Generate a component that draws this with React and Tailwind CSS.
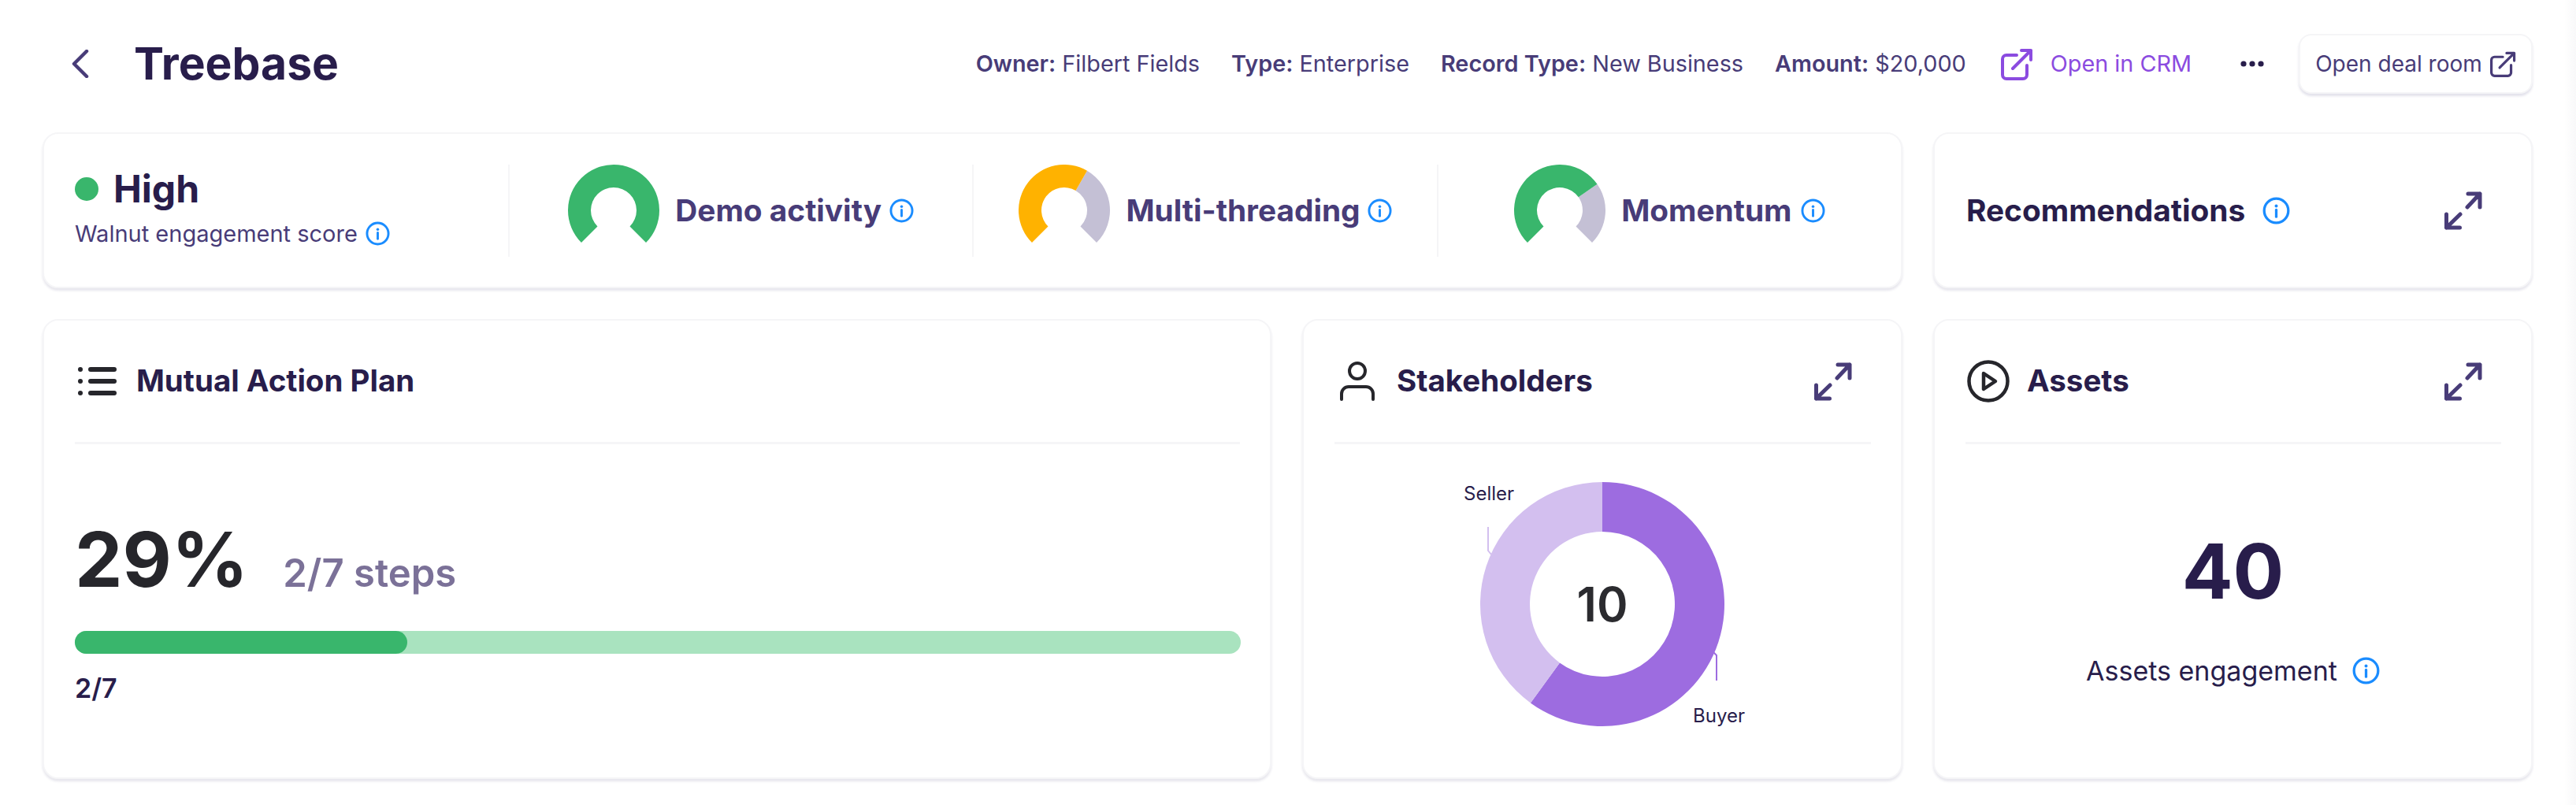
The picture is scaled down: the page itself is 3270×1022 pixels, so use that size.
import React from 'react';

const polar = (cx, cy, r, deg) => {
  const rad = ((deg - 90) * Math.PI) / 180;
  return [cx + r * Math.cos(rad), cy + r * Math.sin(rad)];
};

// ring segment between two angles, 0deg is straight up
const arc = (cx, cy, outer, inner, from, to) => {
  const large = to - from > 180 ? 1 : 0;
  const [x1, y1] = polar(cx, cy, outer, from);
  const [x2, y2] = polar(cx, cy, outer, to);
  const [x3, y3] = polar(cx, cy, inner, to);
  const [x4, y4] = polar(cx, cy, inner, from);
  return `M${x1} ${y1}A${outer} ${outer} 0 ${large} 1 ${x2} ${y2}L${x3} ${y3}A${inner} ${inner} 0 ${large} 0 ${x4} ${y4}Z`;
};

const Gauge = ({ color, split }) => (
  <svg width="116" height="100" viewBox="0 0 116 100" className="shrink-0">
    {split < 135 && <path d={arc(58, 58, 58, 29, split, 135)} fill="#c4c0d5" />}
    <path d={arc(58, 58, 58, 29, -135, split)} fill={color} />
  </svg>
);

const InfoIcon = ({ size = 31 }) => (
  <svg width={size} height={size} viewBox="0 0 32 32" fill="none" className="shrink-0">
    <circle cx="16" cy="16" r="14" stroke="#1a8cff" strokeWidth="3" />
    <circle cx="16" cy="10.5" r="1.8" fill="#1a8cff" />
    <path d="M16 15v8" stroke="#1a8cff" strokeWidth="3" strokeLinecap="round" />
  </svg>
);

const ExpandIcon = () => (
  <svg width="49" height="49" viewBox="0 0 49 49" fill="none" className="shrink-0">
    <path d="M30 20L46 3M31 3h15v17M21 29L3.500 46M3.500 29v17h17" stroke="#483c78" strokeWidth="5" strokeLinecap="round" strokeLinejoin="round" />
  </svg>
);

const ExternalIcon = ({ size, color, width }) => (
  <svg width={size} height={size} viewBox="0 0 41 41" fill="none" className="shrink-0">
    <path d="M20 9H7a5 5 0 0 0-5 5v20a5 5 0 0 0 5 5h21a5 5 0 0 0 5-5V22M15 26L38 3M26 3h12v12" stroke={color} strokeWidth={width} strokeLinecap="round" strokeLinejoin="round" />
  </svg>
);

const Card = ({ className, children }) => (
  <div className={`rounded-[20px] border-2 border-[#f5f5f7] bg-white shadow-[0_3px_3px_rgba(60,50,110,0.12)] ${className}`}>
    {children}
  </div>
);

const Meta = ({ label, value }) => (
  <span className="text-[28.8px] text-[#483c78] whitespace-nowrap">
    <span className="font-semibold">{label}:</span> {value}
  </span>
);

const Metric = ({ title, color, split, gap }) => (
  <div className="flex-1 h-[117px] flex items-center justify-center border-l-2 border-[#f5f5f7]">
    <div className="flex items-center">
      <div className="h-[117px]">
        <Gauge color={color} split={split} />
      </div>
      <span className="ml-[20px] text-[38.8px] font-bold text-[#483c78] whitespace-nowrap">{title}</span>
      <span className={gap}>
        <InfoIcon />
      </span>
    </div>
  </div>
);

const CardHeader = ({ icon, title, expand = true }) => (
  <div className="h-[157px] ml-[39px] mr-[38px] flex items-center justify-between border-b-[3px] border-[#f5f5f7]">
    <div className="flex items-center">
      {icon}
      <span className="text-[38.5px] font-bold text-[#281d4b]">{title}</span>
    </div>
    {expand && (
      <div className="mr-[24px]">
        <ExpandIcon />
      </div>
    )}
  </div>
);

const StakeholderChart = () => (
  <div className="relative w-[380px] h-[340px] mt-[45px] mx-auto">
    <svg width="380" height="340" viewBox="0 0 380 340" fill="none">
      <path d={arc(190, 158, 155, 92, 0, 216)} fill="#9d6ce0" />
      <path d={arc(190, 158, 155, 92, 216, 360)} fill="#d3bfef" />
      <path d="M45 60V90L49 95" stroke="#d3bfef" strokeWidth="2" />
      <path d="M331 219L335 223V255" stroke="#9d6ce0" strokeWidth="2" />
    </svg>
    <span className="absolute left-[14px] top-0 text-[24px] text-[#281d4b]">Seller</span>
    <span className="absolute left-[305px] top-[282px] text-[24px] text-[#281d4b]">Buyer</span>
    <span className="absolute left-0 right-0 top-[122px] text-center text-[60px] leading-[72px] font-semibold text-[#2b2b2f]">10</span>
  </div>
);

export default function App() {
  return (
    <div className="w-[3270px] h-[1022px] flex bg-white font-['Inter','Liberation_Sans',sans-serif] overflow-hidden">
      <div className="flex-1 pl-[54px] pr-[40px]">
        {/* Top bar */}
        <div className="h-[168px] pt-[43px] flex justify-between items-start">
          <div className="h-[76px] flex items-center pl-[36px]">
            <svg width="24" height="36" viewBox="0 0 24 36" fill="none">
              <path d="M20 2L4 18l16 16" stroke="#483c78" strokeWidth="4.500" strokeLinecap="round" strokeLinejoin="round" />
            </svg>
            <h1 className="ml-[56px] text-[57px] font-bold text-[#281d4b]">Treebase</h1>
          </div>
          <div className="flex items-center h-[76px]">
            <div className="flex items-center gap-[40px]">
              <Meta label="Owner" value="Filbert Fields" />
              <Meta label="Type" value="Enterprise" />
              <Meta label="Record Type" value="New Business" />
              <Meta label="Amount" value="$20,000" />
            </div>
            <div className="ml-[44px] flex items-center gap-[22px]">
              <ExternalIcon size={41} color="#8b4be0" width={4} />
              <span className="text-[28.8px] text-[#8b4be0] whitespace-nowrap">Open in CRM</span>
            </div>
            <svg width="30" height="8" viewBox="0 0 30 8" className="ml-[62px] mr-[44px]">
              <circle cx="4" cy="4" r="3.6" fill="#281d4b" />
              <circle cx="15" cy="4" r="3.6" fill="#281d4b" />
              <circle cx="26" cy="4" r="3.6" fill="#281d4b" />
            </svg>
            <button className="h-[76px] w-[297px] flex items-center justify-center gap-[10px] rounded-[16px] border-2 border-[#f5f5f7] bg-white shadow-[0_3px_3px_rgba(60,50,110,0.14)] text-[28px] text-[#483c78] whitespace-nowrap">
              Open deal room
              <ExternalIcon size={33} color="#483c78" width={4} />
            </button>
          </div>
        </div>

        {/* Score row */}
        <div className="flex gap-[39px] h-[198px]">
          <Card className="w-[2361px] flex items-center">
            <div className="w-[589px] self-start pt-[41px] pl-[39px]">
              <div className="flex items-center gap-[19px]">
                <span className="w-[30px] h-[30px] rounded-full bg-[#39b66c]" />
                <span className="text-[48px] leading-[58px] font-bold text-[#281d4b]">High</span>
              </div>
              <div className="mt-[6px] flex items-center gap-[10px]">
                <span className="text-[29px] text-[#483c78]">Walnut engagement score</span>
                <InfoIcon />
              </div>
            </div>
            <Metric title="Demo activity" color="#39b66c" split={135} gap="ml-[10px]" />
            <Metric title="Multi-threading" color="#ffb200" split={30} gap="ml-[9px]" />
            <Metric title="Momentum" color="#39b66c" split={55} gap="ml-[11px]" />
          </Card>
          <Card className="w-[761px] flex items-center justify-between pl-[40px] pr-[62px]">
            <div className="flex items-center gap-[22px]">
              <span className="text-[38.8px] font-bold text-[#281d4b]">Recommendations</span>
              <InfoIcon size={35} />
            </div>
            <ExpandIcon />
          </Card>
        </div>

        {/* Detail row */}
        <div className="flex gap-[39px] h-[584px] mt-[39px]">
          <Card className="w-[1560px]">
            <CardHeader
              expand={false}
              title="Mutual Action Plan"
              icon={
                <svg width="49" height="36" viewBox="0 0 49 36" className="ml-[4px] mr-[25px]" fill="#26262b">
                  <rect x="13" y="0" width="36" height="6" rx="3" />
                  <rect x="13" y="15" width="36" height="6" rx="3" />
                  <rect x="13" y="30" width="36" height="6" rx="3" />
                  <circle cx="3" cy="3" r="3" />
                  <circle cx="3" cy="18" r="3" />
                  <circle cx="3" cy="33" r="3" />
                </svg>
              }
            />
            <div className="ml-[39px] mr-[37px]">
              <div className="mt-[86px] flex items-baseline gap-[44px]">
                <span className="text-[96px] leading-[120px] font-bold text-[#26262b]">29%</span>
                <span className="text-[49px] font-semibold text-[#7b7198]">2/7 steps</span>
              </div>
              <div className="mt-[31px] h-[29px] rounded-full bg-[#a9e3bf]">
                <div className="w-[422px] h-full rounded-full bg-[#39b66c]" />
              </div>
              <div className="mt-[18px] text-[34px] font-semibold text-[#281d4b]">2/7</div>
            </div>
          </Card>

          <Card className="w-[762px]">
            <CardHeader
              title="Stakeholders"
              icon={
                <svg width="44" height="50" viewBox="0 0 44 50" fill="none" className="ml-[7px] mr-[28px]" stroke="#26262b" strokeWidth="4">
                  <circle cx="22" cy="12" r="10" />
                  <path d="M2 48V41a9 9 0 0 1 9-9h22a9 9 0 0 1 9 9v7" strokeLinecap="round" />
                </svg>
              }
            />
            <StakeholderChart />
          </Card>

          <Card className="w-[761px]">
            <CardHeader
              title="Assets"
              icon={
                <svg width="54" height="54" viewBox="0 0 54 54" fill="none" className="ml-[2px] mr-[22px]" stroke="#26262b" strokeWidth="4.5">
                  <circle cx="27" cy="27" r="24.5" />
                  <path d="M21 17l15 10-15 10z" strokeLinejoin="round" />
                </svg>
              }
            />
            <div className="flex flex-col items-center">
              <span className="mt-[103px] text-[96px] leading-[116px] font-bold text-[#281d4b]">40</span>
              <div className="mt-[43px] flex items-center gap-[19px]">
                <span className="text-[34px] text-[#281d4b]">Assets engagement</span>
                <InfoIcon size={35} />
              </div>
            </div>
          </Card>
        </div>
      </div>
      <div className="w-[15px] shrink-0 bg-gradient-to-r from-white to-[#f8f8f9]" />
    </div>
  );
}
